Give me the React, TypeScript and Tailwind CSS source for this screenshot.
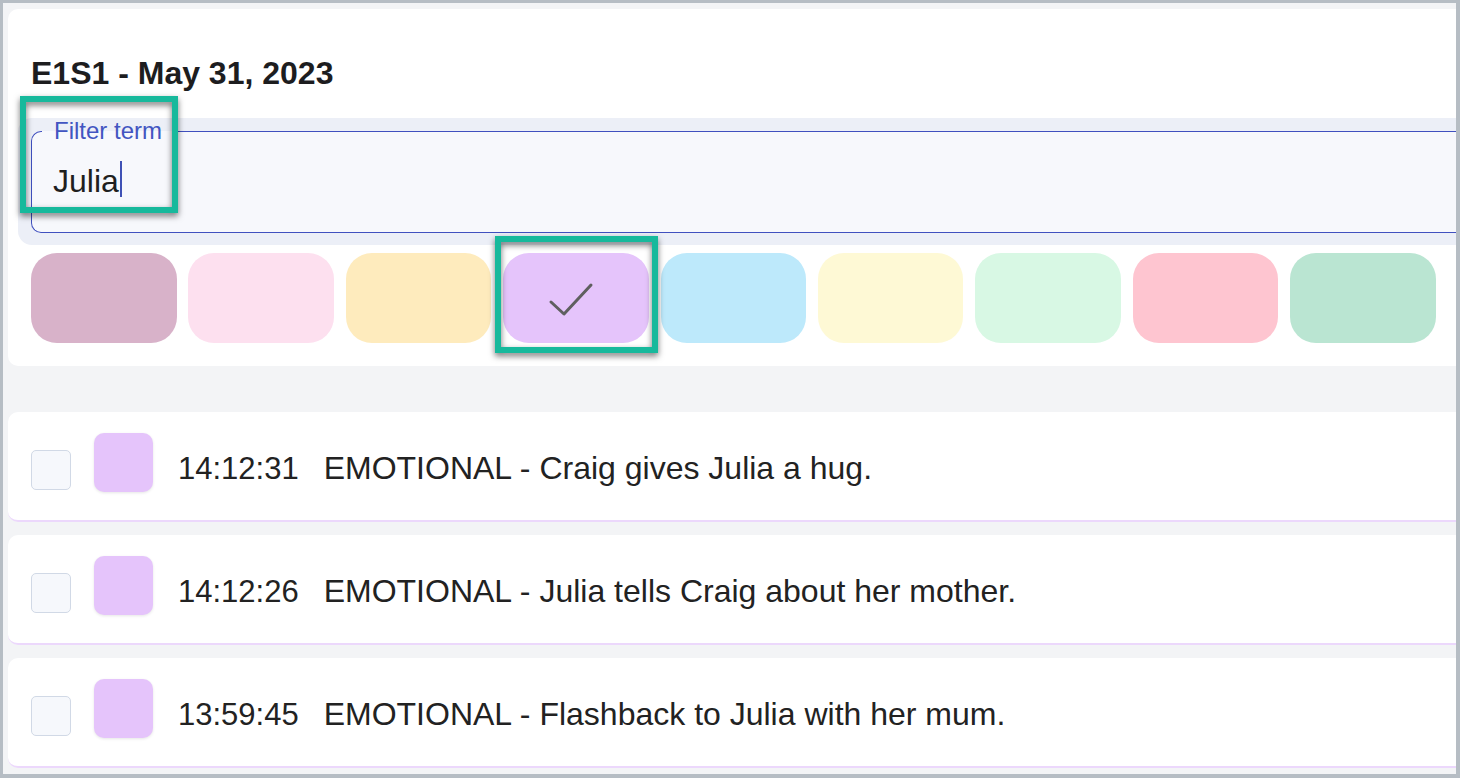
import React from "react";

const swatches = [
  "#d8b2c9",
  "#fde0ef",
  "#feebbd",
  "#e5c4fb",
  "#bde9fb",
  "#fef9d5",
  "#d8f8e4",
  "#fec5d0",
  "#bae5d2",
];

const rows = [
  { time: "14:12:31", text: "EMOTIONAL - Craig gives Julia a hug." },
  { time: "14:12:26", text: "EMOTIONAL - Julia tells Craig about her mother." },
  { time: "13:59:45", text: "EMOTIONAL - Flashback to Julia with her mum." },
];

const Swatch: React.FC<{ color: string; selected: boolean }> = ({ color, selected }) => (
  <div className="w-[145.5px] h-[90px] shrink-0 rounded-[26px]" style={{ backgroundColor: color }}>
    {selected && (
      <svg className="w-full h-full" viewBox="0 0 145.5 90" fill="none">
        <polyline points="48,49 61,61 88,32" stroke="#5f5f5f" strokeWidth="3" strokeLinecap="round" strokeLinejoin="round" />
      </svg>
    )}
  </div>
);

const SceneRow: React.FC<{ time: string; text: string }> = ({ time, text }) => (
  <div className="h-[110px] bg-white rounded-l-[10px] border-b-2 border-[#ecd8fc] flex items-start pl-[23px]">
    <div className="mt-[38px] w-[40px] h-[40px] shrink-0 rounded-[5px] border-[1.5px] border-[#d1d9e6] bg-[#f6f8fc]" />
    <div className="ml-[23px] mt-[21px] w-[59px] h-[59px] shrink-0 rounded-[10px] bg-[#e5c4fb] shadow-[0_1px_3px_rgba(0,0,0,0.1)]" />
    <div className="ml-[25px] mt-[40px] leading-[32px] text-[#222] whitespace-nowrap">
      <span className="text-[31px]">{time}</span>
      <span className="ml-[25px] text-[32px]">{text}</span>
    </div>
  </div>
);

export default function App() {
  return (
    <div className="relative w-[1460px] h-[778px] overflow-hidden bg-[#f3f4f6] border-solid border-[#b6bdc4] border-t-[3px] border-l-[3px] border-r-[4px] border-b-[4px] font-['Liberation_Sans',Arial,sans-serif]">
      <div className="pl-[5px] pt-[6px]">
        <section className="bg-white rounded-l-[10px] pt-[48px] pl-[10px] pb-[23px]">
          <h1 className="ml-[13px] text-[32px] leading-[32px] font-bold text-[#1d1d1f]">E1S1 - May 31, 2023</h1>

          <div className="mt-[29px] bg-[#eceff7] rounded-l-[14px] pl-[13px] pb-[12px]">
            <fieldset className="rounded-l-[10px] border border-r-0 border-[#4050bf] bg-[#f7f8fc]">
              <legend className="ml-[10px] px-[12px] text-[24px] leading-[26px] text-[#4255c1]">Filter term</legend>
              <div className="pl-[21px] pt-[21px] pb-[35px] text-[32px] leading-[32px] text-[#1f1f1f] flex items-center">
                <span>Julia</span>
                <span className="ml-[1px] -mt-[4px] w-[2.5px] h-[36px] bg-[#3f51b5]" />
              </div>
            </fieldset>
          </div>

          <div className="mt-[8px] ml-[13px] flex gap-[11.9px]">
            {swatches.map((c, i) => (
              <Swatch key={c} color={c} selected={i === 3} />
            ))}
          </div>
        </section>

        <div className="mt-[46px] flex flex-col gap-[13px]">
          {rows.map((r) => (
            <SceneRow key={r.time} {...r} />
          ))}
        </div>
      </div>

      {/* annotation frames */}
      <div className="absolute left-[17px] top-[93px] w-[158px] h-[117px] border-[6px] border-[#17b99c] drop-shadow-[0_3px_3px_rgba(0,0,0,0.55)]" />
      <div className="absolute left-[492px] top-[233px] w-[163px] h-[117px] border-[6px] border-[#17b99c] drop-shadow-[0_3px_3px_rgba(0,0,0,0.55)]" />
    </div>
  );
}
